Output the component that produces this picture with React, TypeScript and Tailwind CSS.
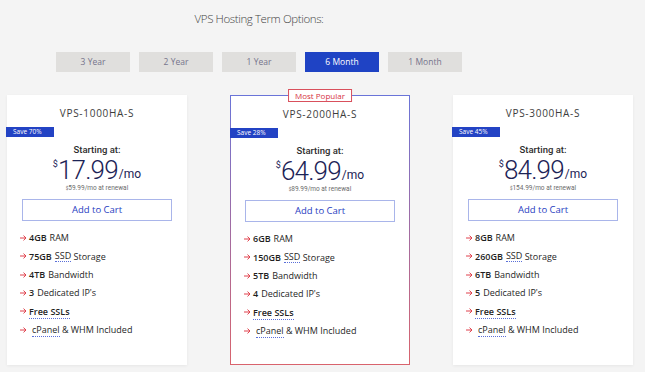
import React from 'react'

const terms = ['3 Year', '2 Year', '1 Year', '6 Month', '1 Month']

type Plan = {
  name: string
  save: string
  price: string
  renewal: string
  ram: string
  ssd: string
  bw: string
  ips: string
  popular?: boolean
}

const plans: Plan[] = [
  { name: 'VPS-1000HA-S', save: 'Save 70%', price: '17.99', renewal: '59.99', ram: '4GB', ssd: '75GB', bw: '4TB', ips: '3' },
  { name: 'VPS-2000HA-S', save: 'Save 28%', price: '64.99', renewal: '89.99', ram: '6GB', ssd: '150GB', bw: '5TB', ips: '4', popular: true },
  { name: 'VPS-3000HA-S', save: 'Save 45%', price: '84.99', renewal: '154.99', ram: '8GB', ssd: '260GB', bw: '6TB', ips: '5' },
]

function Arrow() {
  return (
    <svg width="7" height="6" viewBox="0 0 7 6" className="mr-[2px] shrink-0">
      <path d="M0 3h6M3.5 0.6L6 3 3.5 5.4" fill="none" stroke="#e0414c" strokeWidth="1" />
    </svg>
  )
}

function Dotted({ children }: { children: React.ReactNode }) {
  return <span className="border-b border-dotted border-[#5a6fd8] leading-[10px]">{children}</span>
}

function Card({ plan }: { plan: Plan }) {
  const frame = plan.popular
    ? 'border border-transparent [background:linear-gradient(white,white)_padding-box,linear-gradient(#6a74d8,#d9636c)_border-box]'
    : 'bg-white shadow-[0_1px_3px_rgba(0,0,0,0.06)]'
  return (
    <div className={`relative w-[180px] h-[270px] ${frame} flex flex-col items-center`}>
      {plan.popular && (
        <div className="absolute -top-[7px] left-1/2 -translate-x-1/2 h-[13px] px-[6px] bg-white border border-[#d9505c] text-[#d6323f] text-[8px] leading-[11px] whitespace-nowrap">
          Most Popular
        </div>
      )}
      <div className="mt-[12px] h-[12px] text-[10px] leading-[12px] tracking-[0.7px] text-[#3d3d3d]">{plan.name}</div>
      <div className="self-start -ml-[1px] mt-[8px] h-[10px] w-[48px] bg-[#2343c4] text-white text-[6.5px] leading-[10px] pl-[7px]">
        {plan.save}
      </div>
      <div className="mt-[7px] h-[11px] text-[9.5px] leading-[11px] font-medium text-[#2e2e2e] font-['Roboto',sans-serif]">
        Starting at:
      </div>
      <div className="mt-[2px] h-[26px] flex items-start text-[#1c2356] font-['Roboto',sans-serif]">
        <span className="text-[9px] leading-[10px] mt-[2px]">$</span>
        <span className="text-[26px] leading-[26px] font-light tracking-[-0.8px]">{plan.price}</span>
        <span className="text-[12px] leading-[12px] mt-[11px] ml-[1px]">/mo</span>
      </div>
      <div className="mt-[1px] h-[9px] text-[6.5px] leading-[9px] text-[#6b6b6b] font-['Roboto',sans-serif]">
        <span className="text-[4.5px] align-top">$</span>
        {plan.renewal}/mo at renewal
      </div>
      <div className="mt-[6px] w-[150px] h-[22px] border border-[#a9b5ea] flex items-center justify-center text-[9.5px] text-[#2740c1]">
        Add to Cart
      </div>
      <ul className="self-start mt-[8px] pl-[13px] flex flex-col text-[9px] text-[#1f1f1f]">
        <li className="h-[18.3px] flex items-center"><Arrow /><b className="font-semibold mr-[3px]">{plan.ram}</b>RAM</li>
        <li className="h-[18.3px] flex items-center"><Arrow /><b className="font-semibold mr-[3px]">{plan.ssd}</b><Dotted>SSD</Dotted>&nbsp;Storage</li>
        <li className="h-[18.3px] flex items-center"><Arrow /><b className="font-semibold mr-[3px]">{plan.bw}</b>Bandwidth</li>
        <li className="h-[18.3px] flex items-center"><Arrow /><b className="font-semibold mr-[3px]">{plan.ips}</b>Dedicated IP's</li>
        <li className="h-[18.3px] flex items-center"><Arrow /><b className="font-semibold"><Dotted>Free SSLs</Dotted></b></li>
        <li className="h-[18.3px] flex items-center"><Arrow /><span className="ml-[3px]"><Dotted>cPanel</Dotted> &amp; WHM Included</span></li>
      </ul>
    </div>
  )
}

export default function App() {
  return (
    <div className="w-full h-[372px] overflow-hidden bg-[#f4f4f4] font-['Open_Sans',sans-serif]">
      <div className="ml-[56px] w-[406px]">
        <div className="pt-[11px] text-center text-[11.5px] leading-[16px] font-light tracking-[-0.4px] text-[#444]">
          VPS Hosting Term Options:
        </div>
        <div className="mt-[25px] flex gap-[9px]">
          {terms.map((t) => (
            <div
              key={t}
              className={`w-[74px] h-[20px] flex items-center justify-center text-[8.5px] ${
                t === '6 Month' ? 'bg-[#1f43c4] text-white' : 'bg-[#e0dfdd] text-[#76748c]'
              }`}
            >
              {t}
            </div>
          ))}
        </div>
      </div>
      <div className="mt-[23px] pl-[7px] flex gap-[43px]">
        {plans.map((p) => (
          <Card key={p.name} plan={p} />
        ))}
      </div>
    </div>
  )
}
